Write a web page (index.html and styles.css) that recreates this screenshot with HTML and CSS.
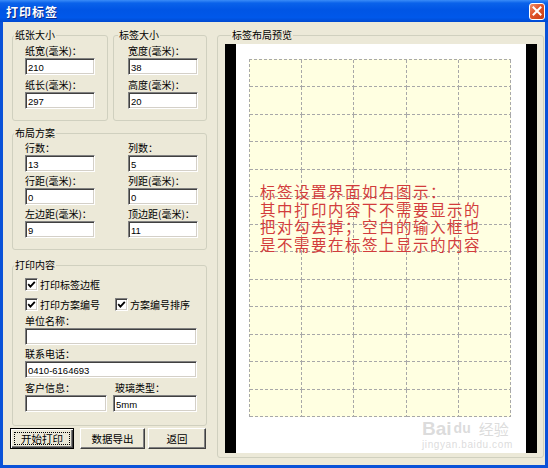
FILE: index.html
```html
<!DOCTYPE html>
<html lang="zh-CN">
<head>
<meta charset="utf-8">
<title>打印标签</title>
<link rel="stylesheet" href="styles.css">
</head>
<body>
<div class="window">
  <div class="titlebar">
    <span class="title">打印标签</span>
    <span class="close"><svg width="10" height="10" viewBox="0 0 10 10"><path d="M1.5 1.5 L8.5 8.5 M8.5 1.5 L1.5 8.5" stroke="#fff" stroke-width="2" stroke-linecap="square"/></svg></span>
  </div>
  <div class="body">
    <div class="left">
      <div class="toprow">
        <fieldset class="gb gb-paper">
          <legend>纸张大小</legend>
          <div class="gb-in stack">
            <div class="field"><span class="lbl">纸宽(毫米)：</span><input class="inp" type="text" value="210"></div>
            <div class="field"><span class="lbl">纸长(毫米)：</span><input class="inp" type="text" value="297"></div>
          </div>
        </fieldset>
        <fieldset class="gb gb-label">
          <legend>标签大小</legend>
          <div class="gb-in stack">
            <div class="field"><span class="lbl">宽度(毫米)：</span><input class="inp" type="text" value="38"></div>
            <div class="field"><span class="lbl">高度(毫米)：</span><input class="inp" type="text" value="20"></div>
          </div>
        </fieldset>
      </div>
      <fieldset class="gb gb-layout">
        <legend>布局方案</legend>
        <div class="gb-in layout-grid">
          <div class="field"><span class="lbl">行数：</span><input class="inp" type="text" value="13"></div>
          <div class="field"><span class="lbl">列数：</span><input class="inp" type="text" value="5"></div>
          <div class="field"><span class="lbl">行距(毫米)：</span><input class="inp" type="text" value="0"></div>
          <div class="field"><span class="lbl">列距(毫米)：</span><input class="inp" type="text" value="0"></div>
          <div class="field"><span class="lbl">左边距(毫米)：</span><input class="inp" type="text" value="9"></div>
          <div class="field"><span class="lbl">顶边距(毫米)：</span><input class="inp" type="text" value="11"></div>
        </div>
      </fieldset>
      <fieldset class="gb gb-content">
        <legend>打印内容</legend>
        <div class="gb-in">
          <div class="chkrow">
            <span class="chk"><span class="box"><svg width="9" height="9" viewBox="0 0 9 9"><path d="M1.2 4.2 L3.4 6.6 L7.8 1.8" fill="none" stroke="#000" stroke-width="1.8"/></svg></span>打印标签边框</span>
          </div>
          <div class="chkrow">
            <span class="chk chk-a"><span class="box"><svg width="9" height="9" viewBox="0 0 9 9"><path d="M1.2 4.2 L3.4 6.6 L7.8 1.8" fill="none" stroke="#000" stroke-width="1.8"/></svg></span>打印方案编号</span>
            <span class="chk"><span class="box"><svg width="9" height="9" viewBox="0 0 9 9"><path d="M1.2 4.2 L3.4 6.6 L7.8 1.8" fill="none" stroke="#000" stroke-width="1.8"/></svg></span>方案编号排序</span>
          </div>
          <div class="field"><span class="lbl">单位名称：</span><input class="inp inp-wide" type="text" value=""></div>
          <div class="field f2"><span class="lbl">联系电话：</span><input class="inp inp-wide" type="text" value="0410-6164693"></div>
          <div class="pair">
            <div class="field"><span class="lbl">客户信息：</span><input class="inp inp-cust" type="text" value=""></div>
            <div class="field"><span class="lbl lbl-glass">玻璃类型：</span><input class="inp inp-glass" type="text" value="5mm"></div>
          </div>
        </div>
      </fieldset>
      <div class="buttons">
        <button class="btn btn-default b1"><span class="focus">开始打印</span></button>
        <button class="btn b2">数据导出</button>
        <button class="btn b3">返回</button>
      </div>
    </div>
    <fieldset class="gb gb-preview">
      <legend>标签布局预览</legend>
      <div class="paper">
        <div class="grid">
          <div></div><div></div><div></div><div></div><div></div>
          <div></div><div></div><div></div><div></div><div></div>
          <div></div><div></div><div></div><div></div><div></div>
          <div></div><div></div><div></div><div></div><div></div>
          <div></div><div></div><div></div><div></div><div></div>
          <div></div><div></div><div></div><div></div><div></div>
          <div></div><div></div><div></div><div></div><div></div>
          <div></div><div></div><div></div><div></div><div></div>
          <div></div><div></div><div></div><div></div><div></div>
          <div></div><div></div><div></div><div></div><div></div>
          <div></div><div></div><div></div><div></div><div></div>
          <div></div><div></div><div></div><div></div><div></div>
          <div></div><div></div><div></div><div></div><div></div>
        </div>
        <div class="note">
          <div class="nl">标签设置界面如右图示：</div>
          <div class="nl">其中打印内容下不需要显示的</div>
          <div class="nl">把对勾去掉；空白的输入框也</div>
          <div class="nl">是不需要在标签上显示的内容</div>
        </div>
        <div class="wm">
          <div class="wm1">Bai<span class="paw">du</span><span class="wmcn">经验</span></div>
          <div class="wm2">jingyan.baidu.com</div>
        </div>
      </div>
    </fieldset>
  </div>
</div>
</body>
</html>
```

FILE: styles.css
```css
* { box-sizing: border-box; }
html, body { margin: 0; padding: 0; background: #fff; }
body {
  font-family: "Noto Sans CJK SC", "Noto Sans", sans-serif;
  font-size: 10px;
  color: #000;
}
.window {
  width: 548px;
  height: 468px;
  display: flex;
  flex-direction: column;
  background: #ece9d8;
  overflow: hidden;
}
.titlebar {
  height: 22px;
  flex: none;
  display: flex;
  align-items: center;
  justify-content: space-between;
  padding: 0 3px 0 6px;
  background: linear-gradient(#3a8cf8 0%, #0a62ea 14%, #0055e5 45%, #0058ea 80%, #0049d0 100%);
}
.title {
  color: #fff;
  font-weight: bold;
  font-size: 12px;
  letter-spacing: 1px;
  text-shadow: 1px 1px 0 #0a2a8a;
}
.close {
  width: 16px;
  height: 17px;
  border: 1px solid #fff;
  border-radius: 3px;
  background: linear-gradient(135deg, #f0906c 0%, #e0542a 45%, #c63c16 100%);
  display: flex;
  align-items: center;
  justify-content: center;
}
.body {
  flex: 1;
  display: flex;
  gap: 10px;
  padding: 6px 1px 0 9px;
  border-left: 3px solid #0a52d8;
  border-right: 3px solid #0a52d8;
  border-bottom: 3px solid #0a52d8;
}
.left {
  width: 195px;
  flex: none;
  display: flex;
  flex-direction: column;
}
.toprow { display: flex; gap: 5px; }

.gb {
  margin: 0;
  padding: 0;
  min-width: 0;
  border: 1px solid #d0d0bf;
  border-radius: 3px;
}
.gb legend {
  padding: 0 1px;
  margin-left: 1px;
  line-height: 14px;
  font-size: 10px;
}
.gb-paper { width: 96px; height: 93px; }
.gb-label { width: 94px; height: 93px; }
.gb-label legend { margin-left: 4px; }
.gb-paper .gb-in { padding: 2px 0 0 12px; }
.gb-label .gb-in { padding: 2px 0 0 14px; }
.stack { display: flex; flex-direction: column; gap: 3px; }

.field { display: flex; flex-direction: column; }
.lbl { display: block; height: 14px; line-height: 14px; white-space: nowrap; }
.inp {
  display: block;
  width: 70px;
  height: 17px;
  margin: 0;
  padding: 1px 0 0 2px;
  background: #fff;
  border: 1px solid;
  border-color: #808080 #fff #fff #808080;
  box-shadow: inset 1px 1px 0 #404040, inset -1px -1px 0 #d4d0c8;
  font-family: "Liberation Sans", Arial, sans-serif;
  font-size: 9.5px;
  color: #000;
  outline: none;
}

.gb-layout { margin-top: 5px; height: 124px; }
.layout-grid {
  display: grid;
  grid-template-columns: 70px 70px;
  column-gap: 33px;
  row-gap: 2px;
  padding: 1px 0 0 12px;
}

.gb-content { margin-top: 8px; height: 168px; }
.gb-content .gb-in { padding: 2px 0 0 12px; }
.chkrow { height: 20px; display: flex; align-items: center; }
.chk { display: flex; align-items: center; gap: 2px; white-space: nowrap; }
.chk-a { width: 90px; }
.box {
  width: 13px;
  height: 13px;
  background: #fff;
  border: 1px solid;
  border-color: #808080 #fff #fff #808080;
  box-shadow: inset 1px 1px 0 #404040, inset -1px -1px 0 #d4d0c8;
  display: flex;
  align-items: center;
  justify-content: center;
}
.inp-wide { width: 172px; }
.f2 { margin-top: 2px; }
.pair { display: flex; gap: 6px; margin-top: 3px; }
.inp-cust { width: 82px; }
.inp-glass { width: 84px; }
.lbl-glass { padding-left: 2px; }

.buttons { display: flex; margin: 2px 0 0 -2px; }
.btn {
  height: 21px;
  margin: 0;
  padding: 0;
  background: #ece9d8;
  border: 1px solid;
  border-color: #fff #404040 #404040 #fff;
  box-shadow: inset -1px -1px 0 #808080;
  font-family: "Noto Sans CJK SC", sans-serif;
  font-size: 10.5px;
  color: #000;
  display: flex;
  align-items: center;
  justify-content: center;
}
.b1 { width: 64px; }
.b2 { width: 65px; margin-left: 6px; }
.b3 { width: 58px; margin-left: 3px; }
.btn-default {
  border: 1px solid #000;
  box-shadow: inset 1px 1px 0 #fff, inset -1px -1px 0 #404040, inset -2px -2px 0 #808080;
  padding: 3px;
}
.focus {
  flex: 1;
  align-self: stretch;
  border: 1px dotted #000;
  display: flex;
  align-items: center;
  justify-content: center;
}

.gb-preview { width: 327px; height: 430px; padding: 2px 5px 3px 7px; }
.gb-preview legend { margin-left: 6px; }
.paper {
  position: relative;
  width: 312px;
  height: 409px;
  background: #fff;
  border-left: 11px solid #000;
  border-right: 11px solid #000;
  padding: 15px 0 0 13px;
}
.grid {
  width: 262px;
  height: 358px;
  display: grid;
  grid-template-columns: repeat(5, 1fr);
  grid-template-rows: repeat(13, 1fr);
  padding: 1px 0 0 1px;
  background:
    linear-gradient(to right, #a8a8a8 60%, transparent 60%) left top / 5px 1px repeat-x,
    linear-gradient(to bottom, #a8a8a8 60%, transparent 60%) left top / 1px 5px repeat-y,
    #ffffe1;
}
.grid > div {
  background:
    linear-gradient(to bottom, #a8a8a8 60%, transparent 60%) right top / 1px 5px repeat-y,
    linear-gradient(to right, #a8a8a8 60%, transparent 60%) left bottom / 5px 1px repeat-x;
}
.note {
  position: absolute;
  left: 24px;
  top: 139px;
  color: #d23c3c;
}
.nl {
  height: 17.5px;
  font-size: 15.5px;
  line-height: 17.5px;
  letter-spacing: 1.5px;
  white-space: nowrap;
  overflow: visible;
}
.wm {
  position: absolute;
  left: 186px;
  top: 374px;
  color: rgba(190, 190, 190, 0.55);
  font-family: "Liberation Sans", Arial, sans-serif;
  text-shadow: 0 0 1px rgba(255,255,255,0.8);
}
.wm1 { font-size: 19px; font-weight: bold; line-height: 21px; display: flex; align-items: center; }
.paw { font-size: 14px; margin-left: 2px; }
.wmcn { font-family: "Noto Sans CJK SC", sans-serif; font-size: 15px; margin-left: 8px; font-weight: normal; }
.wm2 { font-size: 10px; line-height: 12px; letter-spacing: 0.6px; }
```
